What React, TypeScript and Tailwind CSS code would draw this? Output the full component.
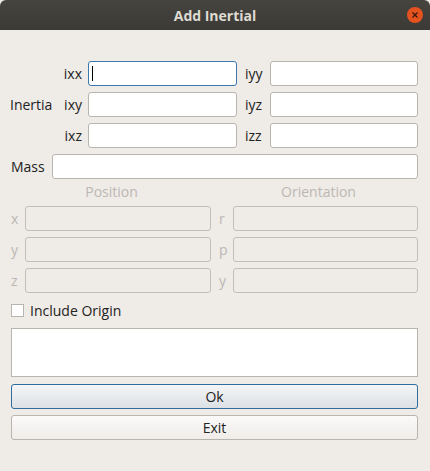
import React from "react";

const font = { fontFamily: '"Open Sans", "Noto Sans", sans-serif' };

function Field({ focused, disabled, className = "" }: { focused?: boolean; disabled?: boolean; className?: string }) {
  let cls = "border-[#b8b4ae] bg-white";
  if (focused) cls = "border-[#3b78ae] bg-white";
  if (disabled) cls = "border-[#c2beb9] bg-[#efebe7]";
  return (
    <div className={`h-[25px] rounded-[3px] border ${cls} flex items-center ${className}`}>
      {focused && <div className="ml-[3px] h-[15px] w-px bg-black" />}
    </div>
  );
}

export default function App() {
  const inertia = [
    { main: "", a: "ixx", b: "iyy", focused: true },
    { main: "Inertia", a: "ixy", b: "iyz" },
    { main: "", a: "ixz", b: "izz" },
  ];
  const pose = [
    ["x", "r"],
    ["y", "p"],
    ["z", "y"],
  ];

  return (
    <div className="w-[430px] h-[471px] bg-[#efebe7] text-[14px] text-[#222] overflow-hidden" style={font}>
      {/* title bar */}
      <div className="relative h-[30px] rounded-t-[6px] bg-gradient-to-b from-[#45443f] to-[#3b3a36] flex items-center justify-center">
        <span className="text-[14px] font-bold text-[#dfdbd2]">Add Inertial</span>
        <div className="absolute right-[7px] top-[7px] w-[16px] h-[16px] rounded-full bg-[#e4521f] flex items-center justify-center">
          <svg width="8" height="8" viewBox="0 0 8 8">
            <path d="M1.5 1.5 L6.5 6.5 M6.5 1.5 L1.5 6.5" stroke="#3a1a0c" strokeWidth="1.3" />
          </svg>
        </div>
      </div>

      <div className="pt-[31px] pl-[10px] pr-[12px] flex flex-col">
        {/* inertia grid */}
        <div className="flex flex-col gap-[6px]">
          {inertia.map((r) => (
            <div key={r.a} className="flex items-center">
              <span className="w-[51px]">{r.main}</span>
              <span className="w-[21px] text-right">{r.a}</span>
              <Field focused={r.focused} className="ml-[6px] w-[149px]" />
              <span className="ml-[8px] w-[18px]">{r.b}</span>
              <Field className="ml-[7px] flex-1" />
            </div>
          ))}
          <div className="flex items-center">
            <span className="ml-[1px] w-[41px]">Mass</span>
            <Field className="flex-1" />
          </div>
        </div>

        {/* position / orientation */}
        <div className="mt-[2px] mb-[3px] flex text-[#bcb8b3]">
          <div className="w-[201px] text-center pl-[2px] h-[22px] leading-[22px]">Position</div>
          <div className="flex-1 text-center pl-[8px] h-[22px] leading-[22px]">Orientation</div>
        </div>
        <div className="flex flex-col gap-[6px]">
          {pose.map(([a, b], i) => (
            <div key={i} className="flex items-center text-[#bcb8b3]">
              <span className="ml-[1px] w-[14px]">{a}</span>
              <Field disabled className="w-[186px]" />
              <span className="ml-[8px] w-[14px]">{b}</span>
              <Field disabled className="flex-1" />
            </div>
          ))}
        </div>

        {/* include origin */}
        <div className="mt-[11px] flex items-center h-[13px] ml-[1px]">
          <div className="w-[13px] h-[13px] border border-[#b8b4ae] bg-white" />
          <span className="ml-[6px]">Include Origin</span>
        </div>

        <div className="mt-[11px] ml-[1px] h-[49px] border border-[#b8b4ae] bg-white" />

        <button className="mt-[7px] ml-[1px] h-[25px] rounded-[3px] border border-[#2f6d9d] bg-gradient-to-b from-[#f4f5f6] to-[#dde1e5]">
          Ok
        </button>
        <button className="mt-[6px] ml-[1px] h-[25px] rounded-[3px] border border-[#b8b4ae] bg-gradient-to-b from-[#fbfaf9] to-[#efece9]">
          Exit
        </button>
      </div>
    </div>
  );
}
